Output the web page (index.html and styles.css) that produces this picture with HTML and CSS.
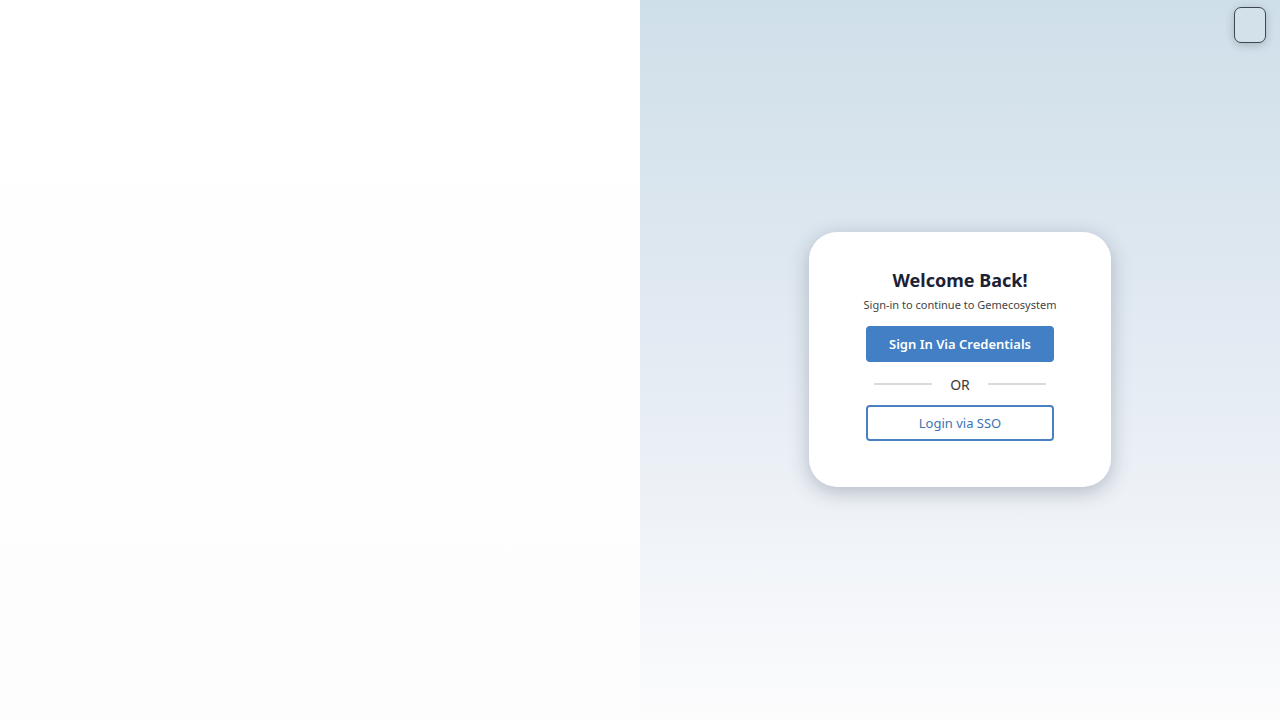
FILE: index.html
```html
<!DOCTYPE html>
<html lang="en">
<head>
<meta charset="utf-8">
<title>Login</title>
<link rel="stylesheet" href="styles.css">
</head>
<body>
<div class="page">
  <div class="left"></div>
  <div class="right">
    <button class="corner-btn" aria-label="menu"></button>
    <div class="card">
      <h1 class="title">Welcome Back!</h1>
      <p class="subtitle">Sign-in to continue to Gemecosystem</p>
      <button class="btn btn-primary">Sign In Via Credentials</button>
      <div class="divider"><span class="line"></span><span class="or">OR</span><span class="line"></span></div>
      <button class="btn btn-outline">Login via SSO</button>
    </div>
  </div>
</div>
</body>
</html>
```
FILE: styles.css
```css
html, body { margin: 0; padding: 0; }
body { font-family: "Noto Sans", "Inter", sans-serif; }
.page { display: flex; width: 1280px; height: 720px; }
.left { width: 640px; height: 720px; background: linear-gradient(#ffffff, #fdfdfe); }
.right {
  position: relative;
  width: 640px; height: 720px;
  background: linear-gradient(180deg, #cfdfe9 0%, #e4ebf3 50%, #fcfcfd 100%);
  display: flex; align-items: center; justify-content: center;
}
.corner-btn {
  position: absolute; top: 7px; right: 14px;
  width: 32px; height: 36px;
  border: 1px solid #3c4753; border-radius: 7px;
  background: #d3e1eb;
  box-shadow: 0 2px 10px rgba(0,0,0,0.2);
  padding: 0;
}
.card {
  width: 302px; height: 255px; box-sizing: border-box;
  background: #fff; border-radius: 28px;
  box-shadow: 0 5px 20px rgba(50,60,80,0.3);
  display: flex; flex-direction: column; align-items: center;
  padding-top: 36px;
  margin-top: -1px;
}
.title { margin: 0; font-size: 18px; font-weight: 700; color: #1d2134; line-height: 24px; }
.subtitle { margin: 5px 0 0; font-size: 11px; color: #444; line-height: 16px; }
.btn {
  width: 188px; height: 36px; box-sizing: border-box;
  border-radius: 4px; font-family: inherit; font-size: 13px; cursor: pointer;
}
.btn-primary { margin-top: 13px; background: #427fc4; color: #fff; border: none; font-weight: 600; }
.btn-outline { background: #fff; color: #3e73b3; border: 2px solid #4a80c2; }
.divider { display: flex; align-items: center; gap: 18px; margin: 12px 0 11px; height: 20px; }
.line { width: 58px; height: 2px; background: #d9dadc; }
.or { font-size: 14px; color: #3a3a3a; }
```
